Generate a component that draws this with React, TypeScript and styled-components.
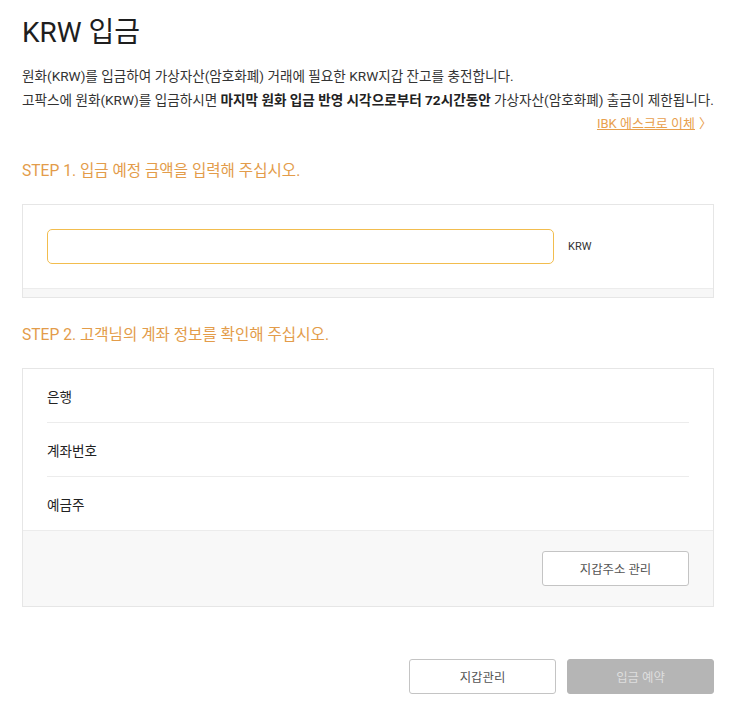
import { FC, ReactElement } from 'react';
import styled, { createGlobalStyle } from 'styled-components';

const GlobalStyle = createGlobalStyle`
  body {
    margin: 0;
    background: #ffffff;
    font-family: Roboto, "Noto Sans CJK KR", sans-serif;
    color: #222222;
  }
`;

const Page = styled.div`
  padding: 14px 20px 0 22px;
`;

const Title = styled.h1`
  margin: 0;
  font-size: 28px;
  font-weight: 400;
  line-height: 38px;
  color: #1e1e1e;
`;

const Desc = styled.div`
  margin-top: 12px;
  font-size: 13.6px;
  line-height: 24px;
  color: #333333;
  white-space: nowrap;

  b {
    font-weight: 700;
    color: #222222;
  }
`;

const LinkRow = styled.div`
  text-align: right;
  font-size: 13px;
  padding-right: 2px;
`;

const Escrow = styled.a`
  color: #e8a04e;
  text-decoration: underline;
  cursor: pointer;

  span {
    display: inline-block;
    margin-left: 4px;
    text-decoration: none;
  }
`;

const StepTitle = styled.h2<{ $top: number }>`
  margin: ${(p) => p.$top}px 0 22px;
  font-size: 15.6px;
  font-weight: 400;
  line-height: 22px;
  color: #e39c4a;
`;

const Panel = styled.div`
  border: 1px solid #e6e6e6;
  background: #ffffff;
`;

const InputArea = styled.div`
  display: flex;
  align-items: center;
  gap: 14px;
  padding: 24px;
`;

const AmountInput = styled.input`
  box-sizing: border-box;
  width: 507px;
  height: 35px;
  border: 1px solid #f2bd4e;
  border-radius: 5px;
  padding: 0 12px;
  font-size: 13px;
  font-family: inherit;
  background: #ffffff;
  outline: none;
`;

const Unit = styled.span`
  font-size: 11px;
  color: #333333;
`;

const Strip = styled.div`
  height: 8px;
  border-top: 1px solid #ececec;
  background: #f7f7f7;
`;

const InfoList = styled.div`
  padding: 0 24px;
`;

const InfoRow = styled.div<{ $last?: boolean }>`
  display: flex;
  align-items: center;
  height: 53px;
  border-bottom: ${(p) => (p.$last ? 'none' : '1px solid #ececec')};
  font-size: 13.6px;
  color: #222222;
`;

const PanelFooter = styled.div`
  display: flex;
  justify-content: flex-end;
  padding: 20px 24px;
  border-top: 1px solid #ececec;
  background: #f8f8f8;
`;

const Button = styled.button<{ $disabled?: boolean }>`
  box-sizing: border-box;
  width: 147px;
  height: 35px;
  border: 1px solid ${(p) => (p.$disabled ? '#b5b5b5' : '#c4c4c4')};
  border-radius: 3px;
  background: ${(p) => (p.$disabled ? '#b5b5b5' : '#ffffff')};
  color: ${(p) => (p.$disabled ? '#dedede' : '#555555')};
  font-size: 12.4px;
  font-family: inherit;
  cursor: pointer;
`;

const Actions = styled.div`
  display: flex;
  justify-content: flex-end;
  gap: 11px;
  margin-top: 52px;
`;

const rows = ['은행', '계좌번호', '예금주'];

const App: FC = (): ReactElement => {
  return (
    <Page>
      <GlobalStyle />

      <Title>KRW 입금</Title>

      <Desc>
        원화(KRW)를 입금하여 가상자산(암호화폐) 거래에 필요한 KRW지갑 잔고를 충전합니다.
        <br />
        고팍스에 원화(KRW)를 입금하시면 <b>마지막 원화 입금 반영 시각으로부터 72시간동안</b> 가상자산(암호화폐) 출금이 제한됩니다.
        <LinkRow>
          <Escrow>
            IBK 에스크로 이체<span>〉</span>
          </Escrow>
        </LinkRow>
      </Desc>

      <StepTitle $top={24}>STEP 1. 입금 예정 금액을 입력해 주십시오.</StepTitle>
      <Panel>
        <InputArea>
          <AmountInput type="text" />
          <Unit>KRW</Unit>
        </InputArea>
        <Strip />
      </Panel>

      <StepTitle $top={26}>STEP 2. 고객님의 계좌 정보를 확인해 주십시오.</StepTitle>
      <Panel>
        <InfoList>
          {rows.map((label, i) => (
            <InfoRow key={label} $last={i === rows.length - 1}>
              {label}
            </InfoRow>
          ))}
        </InfoList>
        <PanelFooter>
          <Button>지갑주소 관리</Button>
        </PanelFooter>
      </Panel>

      <Actions>
        <Button>지갑관리</Button>
        <Button $disabled>입금 예약</Button>
      </Actions>
    </Page>
  );
};

export default App;
